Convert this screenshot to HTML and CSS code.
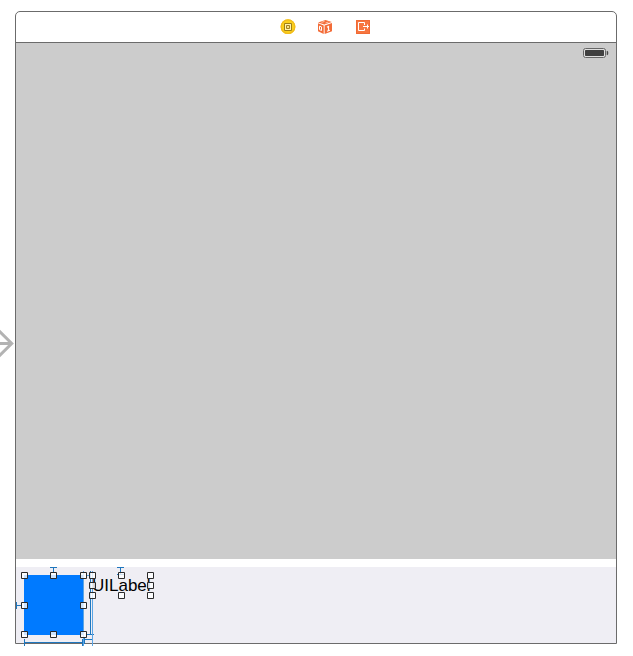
FILE: index.html
```
<!DOCTYPE html>
<html lang="en">
<head>
<meta charset="utf-8">
<title>View Controller</title>
<link rel="stylesheet" href="styles.css">
</head>
<body>
<main class="scene">
  <header class="dock">
    <svg class="icon" width="16" height="16" viewBox="0 0 16 16">
      <circle cx="9" cy="7.7" r="7.4" fill="#fbd01c"/>
      <circle cx="9" cy="7.7" r="6.8" fill="none" stroke="#f0bb1d" stroke-width="1.2"/>
      <path d="M5.5 4.5h7v7h-7z" fill="#fff3ae" stroke="#a07f16"/>
      <path d="M7.5 6.5h3v3h-3z" fill="#f5df83" stroke="#a48220"/>
    </svg>
    <svg class="icon" width="16" height="16" viewBox="0 0 16 16">
      <path d="M1 3.4 8.5 1l6.3 2.1-7.5 2.5z" fill="#f36c38"/>
      <path d="M1 4.3l5.7 2.1V15L1 12.2z" fill="#f36c38"/>
      <path d="M7.6 6.4 15 4v8.2L7.6 15z" fill="#f36c38"/>
      <path d="M4.5 3.4l3-1M8.5 4l3-1" stroke="#ffd5c4" stroke-width=".8"/>
      <path d="M2.5 7.2l2 .7v3.6l-2-.9z" fill="none" stroke="#fff"/>
      <path d="M10 8.2l1.5-.8v4.5M9.9 12.3l3-1" fill="none" stroke="#fff" stroke-width="1.2"/>
    </svg>
    <svg class="icon" width="16" height="16" viewBox="0 0 16 16">
      <path d="M1 1h14v14H1z" fill="#f77640"/>
      <path d="M1.5 1.5h13v13h-13z" fill="none" stroke="#f06a35"/>
      <path d="M9.5 6V3.5h-6v8h6V9.5M8 7.5h6M12.5 5.5v4" fill="none" stroke="#fff"/>
    </svg>
  </header>
  <section class="content">
    <svg width="26" height="10" viewBox="0 0 26 10">
      <rect x=".5" y=".5" width="22" height="9" rx="2" fill="#dedede" stroke="#666"/>
      <rect x="2" y="2" width="19" height="6" rx=".7" fill="#404040"/>
      <path d="M24 3q1 0 1 2t-1 2z" fill="#404040" stroke="#404040" stroke-width=".5"/>
    </svg>
  </section>
  <section class="toolbar">
    <div class="swatch"></div>
    <span class="label">UILabel</span>
  </section>
</main>
<svg class="entry" width="15" height="30" viewBox="0 0 15 30">
  <path d="M0 14.5h11M-2 1 11.7 14.5-2 28" fill="none" stroke="#b3b3b3" stroke-width="3"/>
</svg>
<svg class="selection" width="145" height="84" viewBox="15 565 145 84">
  <g class="guide">
    <path d="M50 567.5h7M53.5 567v6M16.5 602v7M16 605.5h6M117 567.5h7M120.5 567v8M117 574.5h7"/>
    <path d="M24.5 639v7M24 642.5h59M82.5 639v7M90.5 571v63M87 634.5h7M84.5 637v7M84 639.5h8"/>
  </g>
  <g class="guide-light">
    <path d="M83.5 571v75M92.5 571v75M87 575.5h3"/>
  </g>
  <g class="handles">
    <path d="M21.5 572.5h6v6h-6zM50.5 572.5h6v6h-6zM80.5 572.5h6v6h-6zM21.5 602.5h6v6h-6zM80.5 602.5h6v6h-6zM21.5 631.5h6v6h-6zM50.5 631.5h6v6h-6zM80.5 631.5h6v6h-6z"/>
    <path d="M89.5 572.5h6v6h-6zM118.5 572.5h6v6h-6zM147.5 572.5h6v6h-6zM89.5 582.5h6v6h-6zM147.5 582.5h6v6h-6zM89.5 592.5h6v6h-6zM118.5 592.5h6v6h-6zM147.5 592.5h6v6h-6z"/>
  </g>
</svg>
</body>
</html>
```
FILE: styles.css
```
* {
  box-sizing: border-box;
}

body {
  position: relative;
  height: 656px;
  margin: 0;
  padding: 11px 16px 12px 15px;
  overflow: hidden;
  background: #fff;
  font-family: "Liberation Sans", Arial, sans-serif;
}

.scene {
  display: flex;
  flex-direction: column;
  width: 602px;
  height: 633px;
  overflow: hidden;
  border: 1px solid #6b6b6b;
  border-radius: 5px 5px 0 0;
}

.dock {
  display: flex;
  flex: 0 0 31px;
  align-items: center;
  justify-content: center;
  gap: 22px;
  padding-left: 18px;
  border-bottom: 1px solid #6b6b6b;
}

.icon {
  overflow: visible;
}

.content {
  display: flex;
  flex: 0 0 516px;
  align-items: flex-start;
  justify-content: flex-end;
  padding: 5px 7px 0 0;
  background: #ccc;
}

.toolbar {
  display: flex;
  flex: 0 0 76px;
  align-items: flex-start;
  gap: 8px;
  margin-top: 8px;
  padding: 8px;
  background: #efeef4;
}

.swatch {
  width: 60px;
  height: 60px;
  background: #007aff;
}

.label {
  color: #000;
  font-size: 17px;
  line-height: 21px;
}

.entry {
  position: absolute;
  top: 329px;
  left: 0;
}

.selection {
  position: absolute;
  top: 565px;
  left: 15px;
}

.guide {
  fill: none;
  stroke: #1f76bd;
}

.guide-light {
  fill: none;
  stroke: #5ba5e4;
}

.handles {
  fill: rgba(255, 255, 255, 0.8);
  stroke: #2a2a2a;
}
```
